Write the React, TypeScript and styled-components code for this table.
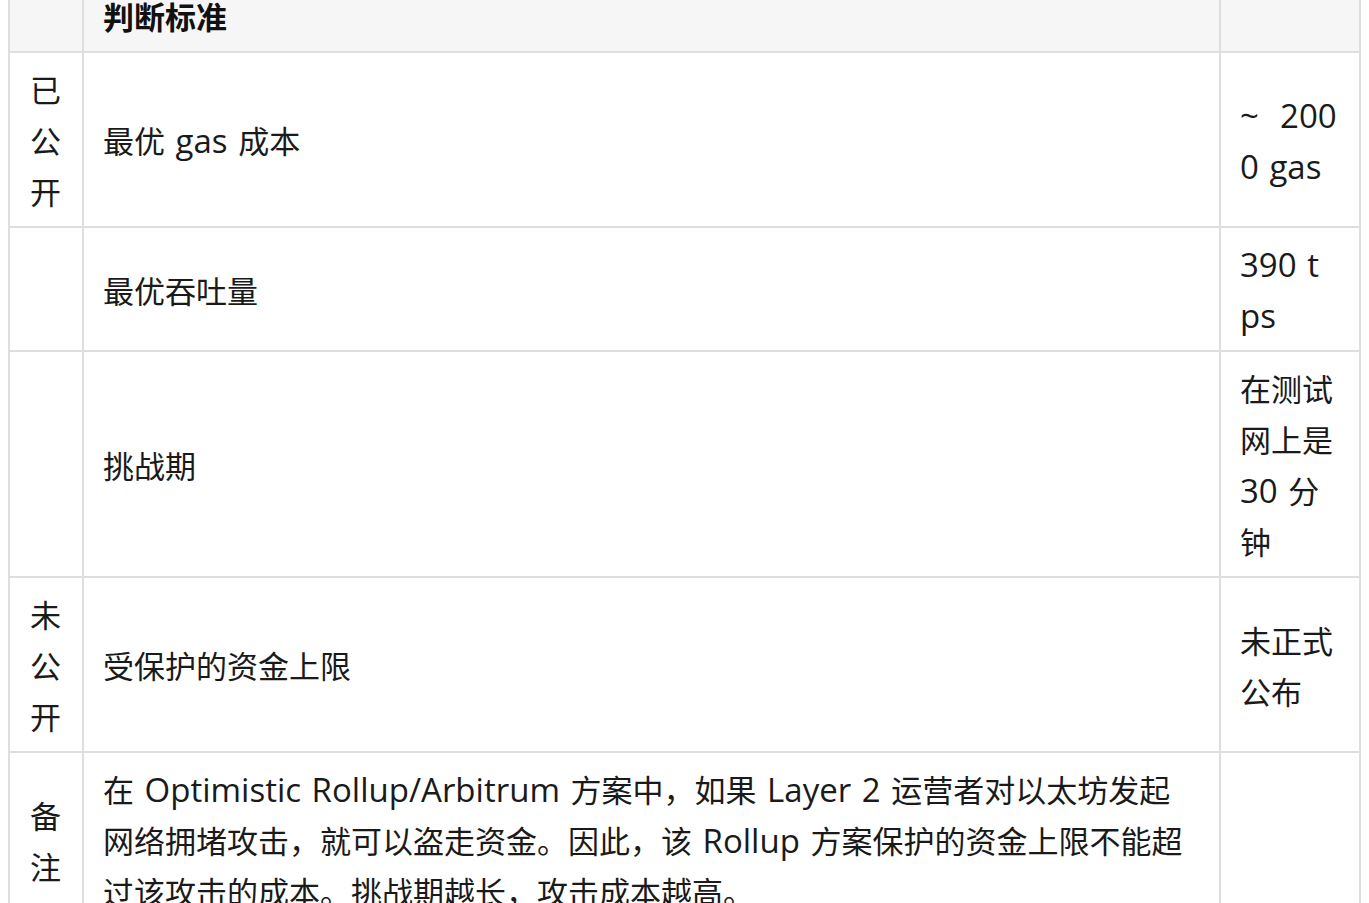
import styled, { createGlobalStyle } from 'styled-components'

type Row = {
  group?: string
  label: string
  value?: string
}

const rows: Row[] = [
  { group: '已公开', label: '最优 gas 成本', value: '~\u00a0 2000 gas' },
  { label: '最优吞吐量', value: '390 tps' },
  { label: '挑战期', value: '在测试网上是 30 分钟' },
  { group: '未公开', label: '受保护的资金上限', value: '未正式公布' },
  {
    group: '备注',
    label:
      '在 Optimistic Rollup/Arbitrum 方案中，如果 Layer 2 运营者对以太坊发起网络拥堵攻击，就可以盗走资金。因此，该 Rollup 方案保护的资金上限不能超过该攻击的成本。挑战期越长，攻击成本越高。',
  },
]

const GlobalStyle = createGlobalStyle`
  html, body {
    margin: 0;
    background: #ffffff;
  }
  body {
    padding: 0 8px;
    overflow: hidden;
    font-family: "Noto Sans CJK SC", sans-serif;
    color: #1a1a1a;
  }
`

// latin runs are drawn a bit larger, like the YaHei/Segoe pairing in the original
const Mixed = ({ text }: { text?: string }) => {
  if (!text) return null
  const parts = text.split(/([\x00-\x7F\u00a0]+)/).filter(Boolean)
  return (
    <>
      {parts.map((part, i) =>
        /^[\x00-\x7F\u00a0]+$/.test(part) ? <_Latin key={i}>{part}</_Latin> : <span key={i}>{part}</span>
      )}
    </>
  )
}

export default function App() {
  return (
    <>
      <GlobalStyle />
      <_Page>
        <_Table>
          <colgroup>
            <_Col $width={74} />
            <col />
            <_Col $width={140} />
          </colgroup>
          <thead>
            <tr>
              <_Head />
              <_Head>判断标准</_Head>
              <_Head />
            </tr>
          </thead>
          <tbody>
            {rows.map((row, i) => (
              <tr key={i}>
                <_GroupCell>{row.group}</_GroupCell>
                <_LabelCell>
                  <Mixed text={row.label} />
                </_LabelCell>
                <_ValueCell>
                  <Mixed text={row.value} />
                </_ValueCell>
              </tr>
            ))}
          </tbody>
        </_Table>
      </_Page>
    </>
  )
}

const _Page = styled.div`
  margin-top: -22px;
`

const _Table = styled.table`
  width: 100%;
  border-collapse: collapse;
  table-layout: fixed;
  font-size: 31px;
  line-height: 51px;
`

const _Col = styled.col<{ $width: number }>`
  width: ${(p) => p.$width}px;
`

const _Head = styled.th`
  background: #f6f6f6;
  border: 2px solid #dedede;
  padding: 10px 19px;
  text-align: left;
  font-weight: 700;
  color: #111;
`

const _Cell = styled.td`
  border: 2px solid #dedede;
  padding: 10px 19px;
  vertical-align: middle;
  word-break: break-all;
`

const _GroupCell = styled(_Cell)`
  padding: 10px 18px 10px 20px;
`

const _LabelCell = styled(_Cell)`
  padding-right: 30px;
`

const _ValueCell = styled(_Cell)`
  padding-right: 21px;
`

const _Latin = styled.span`
  font-family: "Open Sans", "Noto Sans CJK SC", sans-serif;
  font-size: 33px;
  line-height: 1;
  word-spacing: 2px;
`
